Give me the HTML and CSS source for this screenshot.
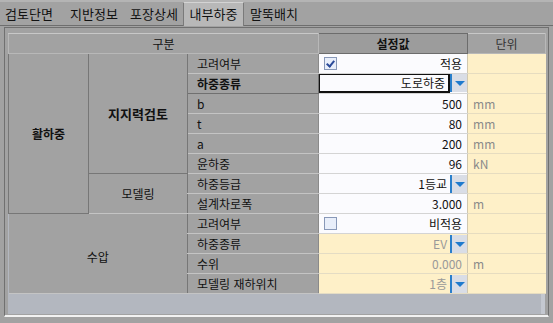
FILE: index.html
```html
<!DOCTYPE html>
<html lang="ko">
<head>
  <meta charset="UTF-8">
  <title>내부하중</title>
  <link rel="stylesheet" href="styles.css">
</head>
<body>
  <div class="tabs">
    <div class="tab first">검토단면</div>
    <div class="tab">지반정보</div>
    <div class="tab">포장상세</div>
    <div class="tab active">내부하중</div>
    <div class="tab">말뚝배치</div>
  </div>

  <div class="panel">
    <div class="sheet">
      <table class="grid">
        <colgroup>
          <col class="c1"><col class="c2"><col class="c3"><col class="c4"><col class="c5">
        </colgroup>
        <tr class="head">
          <th colspan="3">구분</th>
          <th class="h-val">설정값</th>
          <th class="h-unit">단위</th>
        </tr>
        <tr>
          <td rowspan="8" class="group"><span>활하중</span></td>
          <td rowspan="6" class="group sub bold"><span>지지력검토</span></td>
          <td class="lbl">고려여부</td>
          <td class="val"><span class="chk on"></span>적용</td>
          <td class="unit"></td>
        </tr>
        <tr>
          <td class="lbl sel bold">하중종류</td>
          <td class="val drop focus"><span class="txt">도로하중</span><span class="btn"></span></td>
          <td class="unit"></td>
        </tr>
        <tr>
          <td class="lbl">b</td>
          <td class="val">500</td>
          <td class="unit">mm</td>
        </tr>
        <tr>
          <td class="lbl">t</td>
          <td class="val">80</td>
          <td class="unit">mm</td>
        </tr>
        <tr>
          <td class="lbl">a</td>
          <td class="val">200</td>
          <td class="unit">mm</td>
        </tr>
        <tr>
          <td class="lbl">윤하중</td>
          <td class="val">96</td>
          <td class="unit">kN</td>
        </tr>
        <tr>
          <td rowspan="2" class="plain">모델링</td>
          <td class="lbl">하중등급</td>
          <td class="val drop"><span class="txt">1등교</span><span class="btn"></span></td>
          <td class="unit"></td>
        </tr>
        <tr>
          <td class="lbl">설계차로폭</td>
          <td class="val">3.000</td>
          <td class="unit">m</td>
        </tr>
        <tr>
          <td rowspan="4" colspan="2" class="plain top">수압</td>
          <td class="lbl">고려여부</td>
          <td class="val"><span class="chk"></span>비적용</td>
          <td class="unit"></td>
        </tr>
        <tr>
          <td class="lbl">하중종류</td>
          <td class="val off drop"><span class="txt">EV</span><span class="btn"></span></td>
          <td class="unit"></td>
        </tr>
        <tr>
          <td class="lbl">수위</td>
          <td class="val off">0.000</td>
          <td class="unit">m</td>
        </tr>
        <tr>
          <td class="lbl">모델링 재하위치</td>
          <td class="val off drop"><span class="txt">1층</span><span class="btn"></span></td>
          <td class="unit"></td>
        </tr>
      </table>
      <div class="empty"></div>
    </div>
  </div>
</body>
</html>
```

FILE: styles.css
```css
body {
  margin: 0;
  background: #a2a2a2;
  font-family: "Noto Sans CJK KR", "Noto Sans", sans-serif;
  font-size: 12px;
  color: #111;
  width: 553px;
  height: 323px;
  overflow: hidden;
}
.tabs {
  display: flex;
  height: 26px;
  border-top: 2px solid #b4b4b4;
  box-sizing: border-box;
  border-bottom: 1px solid #6e6e6e;
  background: #a2a2a2;
}
.tab {
  width: 60px;
  flex: none;
  text-align: center;
  padding-top: 3px;
  font-size: 13px;
  line-height: 18px;
}
.tab.first {
  width: 64px;
  text-align: left;
  padding-left: 5px;
  box-sizing: border-box;
}
.tab.active {
  width: 61px;
  margin-left: -1px;
  background: #b8b8b8;
  border: 1px solid #7a7a7a;
  border-bottom: none;
  border-top: 1px solid #d4d4d4;
  padding-top: 2px;
  height: 24px;
  box-sizing: border-box;
}
.panel {
  margin: 1px 4px 0 4px;
  height: 290px;
  border: 1px solid #707070;
  border-bottom: 2px solid #f2f2f2;
  box-sizing: border-box;
  padding: 5px 3px 0 3px;
  background: #a2a2a2;
}
.sheet {
  border-right: 4px solid #c4c8d0;
  background: #b3b7bf;
  height: 281px;
}
.grid {
  border-collapse: collapse;
  table-layout: fixed;
  width: 537px;
}
.c1 { width: 80px; }
.c2 { width: 99px; }
.c3 { width: 131px; }
.c4 { width: 149px; }
.c5 { width: 78px; }
.grid tr { height: 20px; }
.grid th, .grid td {
  padding: 0;
  height: 20px;
  box-sizing: border-box;
  white-space: nowrap;
  overflow: hidden;
}
.head th {
  background: #a2a2a2;
  font-weight: normal;
  text-align: center;
  border: 1px solid #b8b8b8;
  border-top: 1px solid #c8c8c8;
}
.head .h-val {
  font-weight: bold;
  background: #9c9c9c;
  border: 1px solid #6c6c6c;
}
.head .h-unit {
  color: #333;
}
.group {
  background: #a2a2a2;
  text-align: center;
  vertical-align: middle;
  border: 1px solid #777;
  font-weight: bold;
  font-size: 12px;
}
.sub {
  font-size: 13px;
}
.plain {
  background: #a2a2a2;
  text-align: center;
  border-bottom: 1px solid #c4c4c4;
  font-size: 12px;
}
.plain.top {
  border-top: 1px solid #c4c4c4;
  padding-top: 6px;
}
.lbl {
  background: #a2a2a2;
  padding-left: 9px !important;
  border-left: 1px solid #777;
  border-bottom: 1px solid #c4c4c4;
  font-size: 12px;
}
.lbl.sel {
  border: 1px solid #707070;
}
.bold { font-weight: bold; }
.val {
  background: #fbfbfe;
  text-align: right;
  padding-right: 5px !important;
  border-bottom: 1px solid #d4d4d4;
  border-left: 1px solid #8a8a8a;
  position: relative;
}
.val.off {
  background: #fef0c8;
  color: #999;
  border-bottom: 1px solid #e4dcc4;
}
.val.drop {
  padding-right: 0 !important;
}
.drop {
  font-size: 0;
}
.drop .txt {
  display: inline-block;
  font-size: 12px;
  vertical-align: top;
  line-height: 18px;
  padding-right: 3px;
}
.drop .btn {
  display: inline-block;
  width: 15px;
  height: 18px;
  vertical-align: top;
  background: #d9dde6;
  border-left: 2px solid #2a7fcb;
  position: relative;
}
.drop .btn::after {
  content: "";
  position: absolute;
  left: 3px;
  top: 7px;
  border-left: 5px solid transparent;
  border-right: 5px solid transparent;
  border-top: 5px solid #1f7acd;
}
.focus .txt {
  width: 132px;
  border: 2px solid #111;
  box-sizing: border-box;
  height: 20px;
  margin-top: -1px;
  line-height: 16px;
  margin-left: -1px;
}
.chk {
  position: absolute;
  left: 5px;
  top: 3px;
  width: 11px;
  height: 11px;
  border: 1px solid #8898b8;
  background: #e8eefa;
}
.chk.on::after {
  content: "";
  position: absolute;
  left: 3px;
  top: 1px;
  width: 3px;
  height: 6px;
  border: solid #2a4a9a;
  border-width: 0 2px 2px 0;
  transform: rotate(40deg);
}
.unit {
  background: #fef0c8;
  color: #8a8a8a;
  padding-left: 5px !important;
  border-bottom: 1px solid #e6dcc0;
  border-left: 1px solid #d0c8b0;
}
.empty {
  height: 21px;
}
```
